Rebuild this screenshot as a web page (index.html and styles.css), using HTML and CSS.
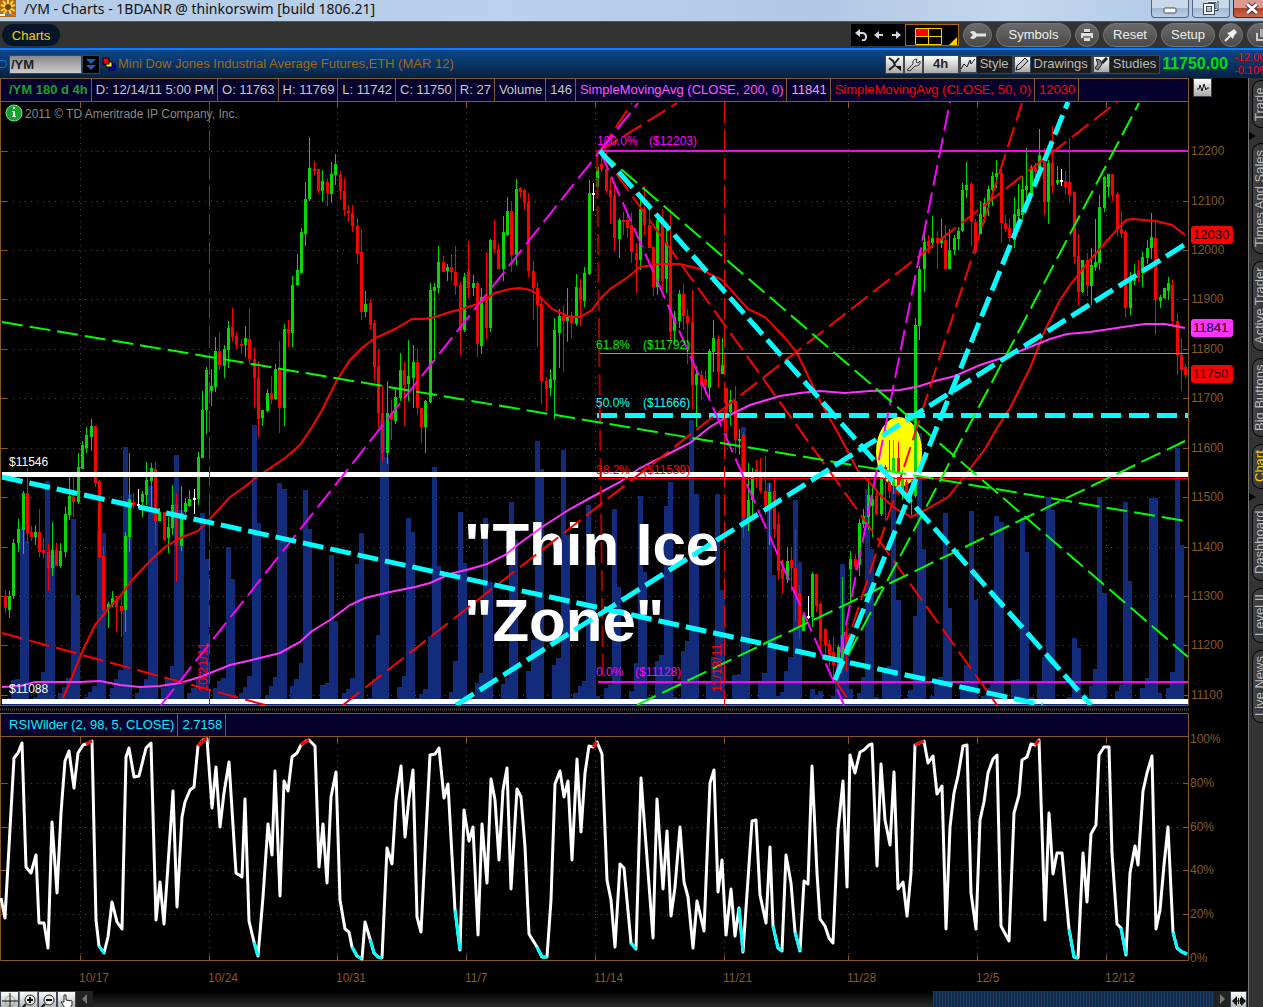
FILE: index.html
```html
<!DOCTYPE html>
<html lang="en">
<head>
<meta charset="utf-8">
<title>/YM - Charts</title>
<link rel="stylesheet" href="styles.css">
</head>
<body>
<div class="window">
  <header class="titlebar">
    <svg class="app-icon" viewBox="0 0 16 17" width="16" height="17"><rect width="16" height="17" fill="#b36a10"/><g stroke="#ffd24a" stroke-width="2"><path d="M8 7V0M8 7l5-6M8 7l7-2M8 7l7 4M8 7l3 7M8 7l-4 7M8 7l-7 4M8 7L1 5M8 7L3 1"/></g><circle cx="8" cy="7" r="3" fill="#7a3c00"/><path d="M0 15h5" stroke="#fff" stroke-width="2"/><path d="M6 15h5" stroke="#3d7ff0" stroke-width="2"/><path d="M11 15h5" stroke="#f60" stroke-width="2"/></svg>
    <h1 class="title">/YM - Charts - 1BDANR @ thinkorswim [build 1806.21]</h1>
    <div class="win-buttons">
      <button class="win" aria-label="Minimize"><svg width="14" height="16"><rect x="1" y="7" width="12" height="5" rx="1" fill="#fff" stroke="#444c5c"/></svg></button>
      <button class="win" aria-label="Restore"><svg width="16" height="16"><path d="M5 .5h9v8h-3" fill="none" stroke="#444c5c" stroke-width="3"/><path d="M5 .5h9v8h-3" fill="none" stroke="#fff"/><rect x="2" y="4" width="8" height="8" fill="none" stroke="#444c5c" stroke-width="4"/><rect x="2" y="4" width="8" height="8" fill="none" stroke="#fff" stroke-width="2"/></svg></button>
      <button class="win win-close" aria-label="Close"><svg width="14" height="14"><path d="M2 2l10 9M12 2L2 11" stroke="#4a3030" stroke-width="5"/><path d="M2 2l10 9M12 2L2 11" stroke="#fff" stroke-width="3"/></svg></button>
    </div>
  </header>

  <nav class="toolbar">
    <button class="tab-charts">Charts</button>
    <div class="tools">
      <div class="history">
        <button class="plain" aria-label="Undo"><svg width="12" height="12"><path d="M3 4h4q4 0 4 4t-4 3" fill="none" stroke="#d5d9e6" stroke-width="2"/><path d="M0 4l5-4v8z" fill="#d5d9e6"/></svg></button>
        <button class="plain" aria-label="Back"><svg width="10" height="10"><path d="M3 5h6" stroke="#d5d9e6" stroke-width="2"/><path d="M0 5l5-4v8z" fill="#d5d9e6"/></svg></button>
        <button class="plain" aria-label="Forward"><svg width="10" height="10"><path d="M1 5h6" stroke="#d5d9e6" stroke-width="2"/><path d="M10 5L5 1v8z" fill="#d5d9e6"/></svg></button>
      </div>
      <button class="layout" aria-label="Grid layout"><svg width="52" height="20"><rect x="10" y="3" width="12" height="8" fill="#f00"/><path d="M9.500 3.500h26v16h-26zM22.500 3v17M9 11.500h26" fill="none" stroke="#fc0"/><path d="M51 12v8h-8z" fill="#fc0"/></svg></button>
      <button class="pill wrench" aria-label="Tools"><svg width="18" height="10"><path d="M1 2q5-3 7 3q-2 6-7 3l3-3z" fill="#e4e4e4"/><path d="M7 5h10" stroke="#e4e4e4" stroke-width="3"/></svg></button>
      <button class="pill symbols">Symbols</button>
      <button class="pill round" aria-label="Print"><svg width="12" height="12"><path d="M3 0h6v3H3zM0 4h12v5H0zM3 8h6v4H3z" fill="#ddd"/><path d="M2 8h8M3 3.500h6" stroke="#222"/></svg></button>
      <button class="pill reset">Reset</button>
      <button class="pill setup">Setup</button>
      <button class="pill round pin" aria-label="Pin"><svg width="14" height="14"><path d="M1 13l5-5" stroke="#eee" stroke-width="2"/><path d="M3 5l6 6 1-3 3-4-3-3-4 3z" fill="#eee"/></svg></button>
      <button class="pill last" aria-label="Detach"><svg width="12" height="12"><rect x="4" width="8" height="8" fill="#aaa"/><path d="M1 4v7h7" fill="none" stroke="#ccc" stroke-width="2"/></svg></button>
    </div>
  </nav>

  <section class="symbolbar">
    <span class="ring"></span>
    <input class="symbol" value="/YM" aria-label="Symbol">
    <button class="drop" aria-label="Symbol list"><svg width="10" height="13"><path d="M0 1h10L5 6zM0 7h10l-5 5z" fill="#1a5fb8"/></svg></button>
    <svg class="link-icon" width="13" height="13"><rect x="6" y="6" width="6" height="6" fill="#00f" stroke="#000"/><rect x="3" y="4" width="6" height="5" fill="#ff0" stroke="#000"/><rect x="0" y="0" width="6" height="6" fill="#f00" stroke="#000"/></svg>
    <span class="instrument">Mini Dow Jones Industrial Average Futures,ETH (MAR 12)</span>
    <div class="chart-tools">
      <button class="tile" aria-label="Pointer"><svg width="16" height="16"><path d="M3 2l4 3 2 4-6 5M9 7l4-5" fill="none" stroke="#222" stroke-width="2"/><path d="M9 10l6 5v-5z" fill="#111"/></svg></button>
      <button class="tile" aria-label="Settings"><svg width="16" height="16"><path d="M2 14l6-6q-1-5 4-5l-1 3 2 1 2-2q1 5-5 5l-5 5z" fill="none" stroke="#333"/></svg></button>
      <button class="tile period">4h</button>
      <button class="tool"><i class="tile"><svg width="16" height="16"><path d="M1 13l3-5 3 3 3-7 1 4 4-5" fill="none" stroke="#111"/></svg></i>Style</button>
      <button class="tool"><i class="tile"><svg width="16" height="16"><path d="M2 14l1-4 8-8 3 3-8 8z" fill="#ccc" stroke="#111"/></svg></i>Drawings</button>
      <button class="tool"><i class="tile"><svg width="16" height="16"><path d="M3 3l4 1 2 4-4 6-3-2 3-4zM9 7l5-5" fill="#888" stroke="#222"/><path d="M9 7l5-5" stroke="#222" stroke-width="3"/></svg></i>Studies</button>
    </div>
    <strong class="price">11750.00</strong>
    <span class="change">-12.00<br>-0.10%</span>
  </section>

  <main class="workspace">
    <div class="charts">
      <div class="readout-row">
        <div class="readout">
          <strong class="series">/YM 180 d 4h</strong><span>D: 12/14/11 5:00 PM</span><span>O: 11763</span><span>H: 11769</span><span>L: 11742</span><span>C: 11750</span><span>R: 27</span><span>Volume</span><span>146</span><span class="sma200">SimpleMovingAvg (CLOSE, 200, 0)</span><span class="pink">11841</span><span class="sma50">SimpleMovingAvg (CLOSE, 50, 0)</span><span class="sma50">12030</span>
        </div>
        <button class="tile" aria-label="Studies"><svg width="16" height="16"><path d="M2 9h2l1-4 2 6 2-7 2 6 1-2h2" fill="none" stroke="#111"/></svg></button>
      </div>
      <svg class="plot" id="price-plot" viewBox="0 102 1248 604" role="img" aria-label="Price chart">
        <g id="price-grid" class="grid"></g>
        <g id="volume" class="volume"></g>
        <ellipse cx="899" cy="452" rx="23" ry="35" fill="#ff0"/>
        <g id="candles"></g>
        <g class="note"><text x="464" y="565">"Thin Ice</text><text x="464" y="641">"Zone"</text></g>
        <path class="ma50" d="M63 698L70 682 82 652 95 625 108 609 120 596 133 579 150 561 165 547 180 538 198 531 209 520 230 497 243 488 257 477 270 468 285 458 300 445 312 427 322 410 337 380 350 360 363 347 375 338 395 329 412 319 424 319 435 317 450 312 462 309 480 303 495 293 510 289 520 288 530 290 537 294 552 309 570 317 580 317 592 310 600 299 610 289 628 277 640 267 660 264 680 264 700 269 722 280 748 309 765 317 785 338 797 353 810 380 820 401 838 433 858 471 870 483 882 497 896 509 911 517 925 510 948 497 960 482 975 462 985 449 997 428 1010 408 1030 368 1045 330 1060 300 1070 285 1090 260 1113 234 1126 220 1133 219 1156 221 1172 225 1185 235"/>
        <path class="ma200" d="M2 687L20 686 35 682 80 682 100 681 120 685 140 687 160 686 180 683 200 677 230 665 260 658 280 653 300 642 312 631 330 620 350 605 365 598 390 592 415 587 430 583 450 574 470 569 487 564 505 555 520 543 545 525 570 509 590 498 620 482 640 468 670 453 690 443 710 427 730 415 750 405 760 402 780 396 800 393 820 391 845 393 870 391 900 390 920 386 935 381 955 376 980 365 1005 357 1030 347 1050 339 1067 334 1090 332 1110 329 1130 326 1145 324 1165 324 1185 328"/>
        <g class="level">
          <path d="M2 474.500H1188M2 701.500H1188" stroke="#fff" stroke-width="5"/>
          <path d="M2 704.500H1188" stroke="#122b7a"/>
          <path d="M598 151H1188M598 682H1188" stroke="#f0f" stroke-width="2"/>
          <path d="M598 353.500H1188" stroke="#0f0"/>
          <path d="M598 478.500H1188" stroke="#f00"/>
          <path d="M597 415.500H1188" stroke="#0ff" stroke-width="5" stroke-dasharray="20 8"/>
        </g>
        <g class="trend">
          <path class="dark" d="M597 150L603 682"/>
          <path class="red thin" d="M209.500 102V705M724.500 102V705"/>
          <path class="red" d="M2 633L265 705M343 705L1117 102M600 151L677 103M600 151L632 103M600 151L997 705M835 680L1022 103M835 680L847 698"/>
          <path class="magenta" d="M161 705L600 151M600 151L638 103M600 151L844 705M835 680L950 102"/>
          <path class="green" d="M2 322L1186 521M600 151L1188 657M637 705L1185 441M835 680L1139 103"/>
          <path class="cyan" d="M2 477L1043 705M456 705L1184 245M600 151L1091 705M835 680L1068 102"/>
        </g>
        <g class="label">
          <text x="25" y="118" class="copy">2011 © TD Ameritrade IP Company, Inc.</text>
          <g fill="#fff"><text x="9" y="466">$11546</text><text x="9" y="693">$11088</text></g>
          <g fill="#f0f"><text x="597" y="145">100.0%</text><text x="649" y="145">($12203)</text><text x="596" y="676">0.0%</text><text x="635" y="676">($11128)</text></g>
          <g fill="#0e0"><text x="596" y="349">61.8%</text><text x="643" y="349">($11792)</text></g>
          <g fill="#0ff"><text x="596" y="407">50.0%</text><text x="643" y="407">($11666)</text></g>
          <g fill="#f00"><text x="596" y="474">38.2%</text><text x="643" y="474">($11539)</text>
          <text class="date" transform="rotate(-90 207 692)" x="207" y="692">10/21/11</text><text class="date" transform="rotate(-90 721 692)" x="721" y="692">11/18/11</text></g>
        </g>
        <circle cx="14" cy="113" r="8" fill="#18a030" stroke="#7de08a"/>
        <path d="M13 107h2v2h-2zM12 111h3v5h1v1h-4v-1h1v-4h-1z" fill="#fff"/>
        <path class="frame" d="M.5 102V705.500H1188.500V102"/>
        <g id="price-axis" class="axis"></g>
        <g class="tag"><rect x="1191" y="226" width="42" height="18" rx="3" fill="#f00"/><text x="1193" y="239">12030</text><rect x="1191" y="319" width="42" height="18" rx="3" fill="#f3f"/><text x="1193" y="332">11841</text><rect x="1191" y="365" width="42" height="18" rx="3" fill="#f00"/><text x="1193" y="378">11750</text></g>
      </svg>
      <div class="splitter"></div>
      <div class="readout rsi-readout"><span>RSIWilder (2, 98, 5, CLOSE)</span><span>2.7158</span></div>
      <svg class="plot" id="rsi-plot" viewBox="0 737 1248 254" role="img" aria-label="RSI chart">
        <g id="rsi-grid" class="grid"></g>
        <path class="frame" d="M.5 737V960.500H1188.500V737"/>
        <g id="rsi-line" class="rsi"></g>
        <g id="rsi-axis" class="axis"></g>
      </svg>
      <footer class="bottombar">
        <button class="tile" aria-label="Crosshair"><svg width="16" height="16"><circle cx="8" cy="8" r="5" fill="none" stroke="#999"/><path d="M8 0v16M0 8h16" stroke="#111"/></svg></button>
        <button class="tile active" aria-label="Zoom in"><svg width="16" height="16"><circle cx="9" cy="7" r="5" fill="#eee" stroke="#222"/><path d="M5 11l-4 4M6 7h6M9 4v6" stroke="#111" stroke-width="2"/></svg></button>
        <button class="tile" aria-label="Zoom out"><svg width="16" height="16"><circle cx="9" cy="7" r="5" fill="#eee" stroke="#222"/><path d="M5 11l-4 4M6 7h6" stroke="#111" stroke-width="2"/></svg></button>
        <button class="tile" aria-label="Pan"><svg width="16" height="16"><path d="M5 9V2h2v5l6 1v4l-2 3H6L2 9z" fill="#fff" stroke="#222"/></svg></button>
        <button class="arrow" aria-label="Scroll left"><svg width="6" height="10"><path d="M5 0v10L0 5z" fill="#777"/></svg></button>
        <div class="track"><div class="thumb"></div></div>
        <button class="arrow" aria-label="Scroll right"><svg width="6" height="10"><path d="M1 0v10l5-5z" fill="#777"/></svg></button>
        <button class="tile fit" aria-label="Fit"><svg width="14" height="12"><path d="M0 6l5-5v10zM14 6L9 1v10z" fill="#111"/><path d="M4 6h6M6.500 3v6M8.500 3v6" stroke="#111"/></svg></button>
      </footer>
    </div>
    <aside class="side">
      <button class="t-trade">Trade</button>
      <i class="notch"></i>
      <button class="t-sales">Times And Sales</button>
      <button class="t-active">Active Trader</button>
      <button class="t-big">Big Buttons</button>
      <button class="t-chart">Chart</button>
      <i class="notch"></i>
      <button class="t-dash">Dashboard</button>
      <button class="t-level">Level II</button>
      <button class="t-news">Live News</button>
    </aside>
  </main>
</div>
<script src="chart.js"></script>
</body>
</html>
```

FILE: styles.css
```css
* { box-sizing: border-box; }
body { margin: 0; background: #000; font: 13px/16px "Liberation Sans", Arial, sans-serif; color: #ccc; overflow-x: hidden; }
button { font: inherit; color: inherit; border: 0; padding: 0; margin: 0; background: none; display: flex; align-items: center; justify-content: center; flex: none; white-space: nowrap; }
svg { display: block; flex: none; }
.window { display: flex; flex-direction: column; min-height: 100vh; overflow: hidden; }

.titlebar { display: flex; align-items: flex-start; height: 21px; background: linear-gradient(90deg, #b3cbe6, #b9d1ea 40%, #b0c8e2 65%, #c3d8ee 80%, #a9c3e0); }
.title { margin: 0 0 0 8px; font: 14px/17px "Noto Sans", sans-serif; color: #111; white-space: nowrap; }
.win-buttons { display: flex; gap: 3px; margin-left: auto; overflow: hidden; width: 112px; }
.win { width: 38px; height: 18px; border: 1px solid #53647c; border-top: 0; border-radius: 0 0 4px 4px; background: linear-gradient(#c9d9ea 50%, #a1bad5 50%, #bcd0e6); }
.win-close { background: linear-gradient(#dc9a8e 45%, #b43b24 45%, #c96a4c); border-color: #5a1c16; }

.toolbar { display: flex; align-items: center; height: 29px; padding-left: 2px; background: #333; border-top: 1px solid #555; border-bottom: 2px solid #0a7cff; }
.tab-charts { width: 58px; height: 22px; border-radius: 11px; background: #06162a; color: #fc0; padding-top: 2px; }
.tools { display: flex; align-items: center; margin-left: auto; width: 412px; overflow: hidden; gap: 4px; }
.history { display: flex; align-items: center; justify-content: space-around; width: 54px; height: 22px; background: #000; flex: none; }
.layout { width: 54px; height: 22px; background: #000; border: 1px solid #a60; margin-left: -4px; }
.pill { height: 24px; border-radius: 12px; border: 1px solid #777; background: linear-gradient(#6a6a6a, #4a4a4a); color: #eee; }
.wrench { width: 29px; }
.symbols { width: 75px; }
.round { width: 24px; }
.reset { width: 54px; }
.setup { width: 54px; }
.last { width: 29px; }

.symbolbar { display: flex; align-items: center; height: 28px; background: linear-gradient(#0b4789, #072c55 75%, #05203e); overflow: hidden; }
.ring { width: 7px; height: 8px; border: 1px solid #1a6cc8; border-left: 0; border-radius: 0 4px 4px 0; margin-right: 2px; flex: none; }
.symbol { width: 73px; height: 19px; padding: 0 1px; border: 1px solid #445; background: linear-gradient(#888, #ccc); font: bold 13px/16px "Liberation Sans", Arial, sans-serif; color: #222; border-radius: 0; }
.drop { width: 18px; height: 19px; background: #000; border: 1px solid #345; }
.link-icon { margin: 0 2px 0 3px; overflow: visible; }
.instrument { color: #a06a10; white-space: nowrap; }
.chart-tools { display: flex; align-items: center; margin-left: auto; }
.tile { display: flex; align-items: center; justify-content: center; width: 19px; height: 19px; flex: none; border: 1px solid #3d4650; background: linear-gradient(#fff, #aaa); color: #222; overflow: hidden; }
.period { width: 36px; font-weight: bold; }
.tool { height: 19px; background: #1c1c1c; border: 1px solid #3d4650; padding-right: 3px; gap: 3px; color: #bbb; }
.tool .tile { width: 17px; height: 17px; }
.price { margin-left: 2px; font-size: 16px; color: #0d0; flex: none; }
.change { width: 29px; margin-left: 6px; overflow: hidden; white-space: nowrap; font-size: 11px; line-height: 13px; color: #f00; flex: none; }

.workspace { display: flex; flex: 1; align-items: stretch; }
.charts { flex: 1; min-width: 0; display: flex; flex-direction: column; }
.readout-row { display: flex; gap: 4px; align-items: flex-start; }
.readout { display: flex; flex: 1; min-width: 0; height: 24px; border: 1px solid #865a20; background: #06002d; overflow: hidden; line-height: 22px; white-space: nowrap; color: #c8c8c8; }
.readout > * { border-right: 1px solid #865a20; padding: 0 3px 0 4px; flex: none; }
.readout-row .tile { margin-right: 36px; }
.readout .series { color: #18a030; padding-left: 8px; }
.readout .sma200 { color: #f5f; }
.readout .pink { color: #f9e; }
.readout .sma50 { color: #f00; }
.rsi-readout { flex: none; margin-right: 59px; color: #0ef; }
.rsi-readout span:first-child { padding-left: 8px; }
.splitter { height: 7px; margin-right: 59px; background: repeating-linear-gradient(90deg, #383838 0 1px, #000 1px 2px) content-box; padding: 2px 0; }

.plot { width: 100%; height: auto; font-size: 12px; overflow: visible; }
#price-plot { overflow: hidden; }
.grid path { stroke: #6c4618; stroke-dasharray: 1 5; fill: none; }
.grid .tick, .frame { stroke: #865a20; stroke-dasharray: none; fill: none; }
.axis { fill: #865a20; }
.volume { fill: #122b7a; }
.ma50 { fill: none; stroke: #f00; stroke-width: 2; }
.ma200 { fill: none; stroke: #f3f; stroke-width: 2; }
.trend path { fill: none; stroke-width: 2; stroke-dasharray: 21 7; }
.trend .red { stroke: #f00; }
.trend .thin { stroke-width: 1; }
.trend .dark { stroke: #a00; }
.trend .magenta { stroke: #f0f; }
.trend .green { stroke: #0f0; }
.trend .cyan { stroke: #0ff; stroke-width: 5; }
.note { font-size: 60px; font-weight: bold; fill: #fff; }
.copy { fill: #888; }
.date { font-size: 13px; }
.tag { fill: #000; font-size: 13px; }
.rsi path { fill: none; stroke: #fff; stroke-width: 3; stroke-linejoin: round; }
.rsi .high { stroke: #f00; }
.rsi .low { stroke: #0ff; }

.bottombar { display: flex; align-items: stretch; height: 16px; background: #111; overflow: hidden; }
.active { border-color: #2a7de0; }
.arrow { width: 17px; background: #222; }
.track { flex: 1; display: flex; justify-content: flex-end; background: linear-gradient(#000, #2a2a2a); }
.thumb { width: 25%; background: repeating-linear-gradient(90deg, #1d4268 0 1px, #12294a 1px 3px); }
.fit { width: 17px; margin-right: 1px; }

.side { width: 15px; flex: none; background: #333; border-left: 1px solid #777; display: flex; flex-direction: column; overflow: hidden; gap: 7px; padding-left: 3px; }
.side button { width: 20px; border: 1px solid #000; border-radius: 9px; background: linear-gradient(90deg, #2e2e2e, #444); color: #bbb; writing-mode: vertical-rl; transform: rotate(180deg); line-height: 16px; padding-left: 5px; }
.side .t-trade { height: 48px; margin-top: 2px; }
.side .t-sales { height: 111px; margin-top: 8px; }
.side .t-active { height: 90px; }
.side .t-big { height: 79px; }
.side .t-chart { height: 45px; color: #fc0; }
.side .t-dash { height: 77px; margin-top: 8px; }
.side .t-level { height: 55px; }
.side .t-news { height: 73px; }
.side .notch { height: 8px; width: 7px; margin: -3px 0 -12px -3px; background: #000; clip-path: polygon(0 0, 100% 50%, 0 100%); flex: none; }
```

FILE: chart.js
```js
const NS = 'http://www.w3.org/2000/svg';

function add(parent, name, attrs, text) {
  const node = document.createElementNS(NS, name);
  for (const key in attrs) node.setAttribute(key, attrs[key]);
  if (text) node.textContent = text;
  document.getElementById(parent).appendChild(node);
}

const weeks = [[80, '10/17'], [209, '10/24'], [337, '10/31'], [466, '11/7'], [595, '11/14'], [724, '11/21'], [848, '11/28'], [977, '12/5'], [1106, '12/12']];
const prices = [151, 201, 250, 299, 349, 398, 448, 497, 547, 596, 645, 695];

prices.forEach((y, i) => {
  add('price-grid', 'path', { d: `M1 ${y + 0.5}H1188` });
  add('price-grid', 'path', { class: 'tick', d: `M1 ${y + 0.5}H7M1183 ${y + 0.5}H1188` });
  add('price-axis', 'text', { x: 1191, y: y + 4 }, String(12200 - i * 100));
});
[783, 827, 870, 914].forEach(y => {
  add('rsi-grid', 'path', { d: `M1 ${y + 0.5}H1188` });
  add('rsi-grid', 'path', { class: 'tick', d: `M1 ${y + 0.5}H7M1183 ${y + 0.5}H1188` });
});
[[739, '100%'], [783, '80%'], [827, '60%'], [870, '40%'], [914, '20%'], [958, '0%']].forEach(([y, t]) => {
  add('rsi-axis', 'text', { x: 1190, y: y + 4 }, t);
});
weeks.forEach(([x, t]) => {
  add('price-grid', 'path', { d: `M${x + 0.5} 113V705` });
  add('price-grid', 'path', { class: 'tick', d: `M${x + 0.5} 102V108` });
  add('rsi-grid', 'path', { d: `M${x + 0.5} 743V960` });
  add('rsi-grid', 'path', { class: 'tick', d: `M${x + 0.5} 737V743M${x + 0.5} 955V960` });
  add('rsi-axis', 'text', { x: x - 1, y: 982 }, t);
});

// Volume: left edge, top
const volume = `7 698,11 680,15 679,20 527,24 541,33 697,37 686,41 672,45 481,50 555,58 693,62 687,66 678,71 519,75 595,84 697,88 692,92 686,97 531,101 533,110 688,114 679,118 670,123 447,127 494,135 693,139 686,144 679,148 486,153 510,161 688,165 678,170 666,174 455,179 510,187 693,191 688,196 679,200 513,204 559,213 688,217 681,221 678,226 547,230 579,239 693,243 687,247 676,252 425,256 523,265 695,269 686,273 677,277 483,282 489,290 686,294 679,299 663,303 490,307 529,
320 685,325 683,329 555,333 621,342 693,346 689,350 678,355 564,359 533,367 698,372 679,376 635,380 420,384 457,397 687,402 676,406 518,410 532,415 698,419 694,423 689,428 636,432 467,436 566,449 692,453 661,458 512,462 563,475 683,479 673,483 518,488 582,501 684,505 678,509 502,513 540,526 671,531 640,535 441,539 469,552 665,556 658,561 450,565 535,569 698,573 693,578 686,582 681,586 505,591 556,595 696,
604 688,608 685,612 509,616 587,629 691,634 663,638 496,642 572,647 697,651 695,655 661,659 655,664 506,668 482,672 697,677 698,681 651,685 641,689 420,694 494,706 683,711 657,715 494,720 590,732 675,737 674,741 427,745 517,758 681,762 673,767 483,771 575,775 696,780 692,784 671,788 657,793 500,797 562,810 689,814 695,818 691,831 696,835 677,840 564,844 653,848 689,857 693,861 677,865 489,869 549,874 697,882 673,887 666,891 487,896 600,
904 698,908 690,913 616,917 433,921 549,930 696,934 681,938 677,943 513,947 608,960 685,964 665,969 511,973 600,981 696,986 688,990 684,994 516,999 522,1011 680,1016 679,1020 517,1024 552,1029 697,1037 681,1042 657,1046 497,1050 510,1067 697,1072 638,1076 648,1089 686,1093 669,1097 497,1102 593,1115 691,1119 685,1123 502,1127 581,1140 688,1145 678,1149 498,1153 498,1157 693,1166 688,1170 672,1175 448,1179 545`;
volume.split(',').forEach(v => {
  const [x, y] = v.trim().split(' ').map(Number);
  add('volume', 'rect', { x, y, width: 5, height: 699 - y });
});

// Candles: colour + centre, high, body top, body bottom, low
const candles = `r5 590 596 608 613,g9 591 596 610 618,g13 539 543 596 599,g18 519 529 543 552,g23 491 493 530 554,r27 468 493 533 544,r31 526 532 537 541,g35 525 532 537 545,r39 509 532 552 557,r43 538 550 553 558,r48 544 552 568 591,g52 522 550 568 576,r56 543 550 566 566,g60 543 551 566 568,g65 507 514 552 557,g69 477 496 515 520,r73 477 497 502 517,g78 453 467 502 504,g82 441 445 469 469,g86 427 435 448 453,g91 419 426 437 451,r95 426 426 483 487,r99 480 481 557 558,r103 546 556 610 612,g108 602 604 609 628,g112 591 598 605 607,r116 596 600 607 632,r121 598 606 611 637,g125 532 536 610 632,g129 453 499 537 552,r133 493 502 506 509,w138 489 504 506 508,g142 491 494 502 517,g146 462 480 495 505,g151 463 468 481 512,r155 462 469 521 545,g159 508 512 521 521,r164 512 512 540 541,g168 517 527 538 553,g172 485 505 528 535,r176 494 504 546 582,g181 486 513 546 551,g185 498 503 512 514,g189 490 499 506 507,w194 489 498 500 514,g198 452 457 499 505,g202 391 410 458 458,g206 367 370 410 434,g211 369 386 391 406,g215 337 351 387 392,r219 332 351 365 370,g224 345 349 366 378,g228 321 328 350 368,r232 308 327 337 341,r236 332 336 345 349,r241 339 344 346 354,g245 326 338 345 357,r249 308 339 359 364,r254 348 359 378 408,r258 361 378 419 437,g262 410 410 418 426,g267 389 393 411 412,r271 376 393 399 404,g275 364 369 399 400,r279 341 368 408 433,g284 324 329 408 426,r288 320 329 333 347,g292 276 285 333 347,g297 254 270 285 286,g301 228 232 273 273,g305 182 199 234 246,g309 137 168 199 201,r314 161 169 171 175,r318 169 169 191 193,
g322 170 181 191 202,r327 179 182 193 206,g331 162 174 194 203,g335 154 164 175 185,r340 171 175 191 200,r344 178 191 210 216,r348 205 211 213 222,r352 205 213 226 232,r357 218 226 254 264,r361 229 252 312 320,g365 291 304 312 317,r370 299 303 325 330,r374 320 323 367 381,r378 349 366 413 428,r382 385 413 453 462,g387 381 413 453 464,r391 400 413 420 440,g395 389 397 421 424,g400 353 370 398 401,r404 362 370 385 426,g408 340 376 384 401,g413 345 362 378 408,r417 348 362 408 415,r421 408 408 427 443,g425 400 401 427 453,g430 283 290 402 403,g434 283 287 291 359,g438 246 262 288 293,r443 256 262 272 272,g447 264 267 271 281,r451 254 267 272 281,r455 246 272 286 295,r460 282 285 330 355,g464 273 277 330 332,r468 241 271 288 298,g473 275 283 288 296,r477 281 283 344 357,g481 288 297 346 354,r486 252 297 328 339,g490 239 240 328 332,r494 220 240 249 254,r498 243 249 269 269,g503 216 232 269 281,g507 197 211 235 236,r511 202 211 255 272,g516 179 189 255 265,r520 187 188 192 198,r524 189 190 203 210,r528 193 202 271 277,r533 261 271 288 320,r537 282 288 305 347,r541 300 304 381 404,r546 377 381 389 411,g550 369 379 388 396,g554 318 330 380 419,g559 309 316 333 368,r563 305 316 321 372,g567 288 317 321 342,r571 312 315 323 339,g576 274 287 324 326,r580 279 288 300 326,g584 267 273 301 307,g589 180 193 274 275,w593 183 193 195 211,g597 152 167 187 187,
r601 150 164 169 172,r606 150 169 191 193,r610 178 190 197 224,r614 184 196 238 251,g619 218 220 239 258,r623 212 220 222 235,r627 212 220 228 238,r631 212 225 252 263,r636 243 253 260 293,g640 200 209 260 270,r644 186 209 225 235,r649 209 225 248 248,r653 247 247 287 296,g657 216 220 287 295,r662 209 218 281 289,g666 223 242 279 293,r670 209 246 332 340,g674 311 317 331 344,g679 290 294 321 328,r683 284 294 316 330,r687 309 316 323 364,r692 290 322 385 410,g696 366 374 385 427,r701 370 375 386 400,r705 370 379 385 395,g709 349 351 388 398,g713 320 338 352 372,r718 335 339 372 388,g722 338 365 374 374,r726 388 388 410 438,g730 390 400 412 425,r735 386 401 440 453,g739 429 439 441 455,r743 432 435 518 538,g748 463 500 519 531,g752 468 472 500 517,r756 460 469 472 488,r760 458 471 491 493,r765 456 491 505 515,g769 483 492 505 545,r774 478 491 529 538,r778 513 524 571 580,r782 560 569 579 594,g787 547 561 579 583,r791 547 560 568 591,r795 529 568 594 621,r799 585 593 626 639,g803 613 615 631 631,w808 596 616 618 619,g812 572 574 617 627,r816 574 574 606 612,r820 602 604 641 650,r825 628 629 645 661,r829 640 644 659 667,r833 636 652 665 676,g838 645 647 661 675,g842 577 635 658 660,r846 620 637 655 672,g850 551 559 569 601,r855 554 559 567 570,g859 519 523 565 576,g863 509 516 524 528,g868 478 495 517 530,g872 488 499 506 537,r876 490 496 514 516,g881 471 477 514 516,r885 465 467 477 521,r889 440 470 491 498,g893 440 458 486 494,r898 442 458 488 495,g902 470 478 490 500,r906 480 482 494 502,g911 480 486 489 515,g915 318 325 496 498,
g919 266 269 326 340,g924 234 242 269 292,r928 235 241 246 253,g932 216 238 243 248,r937 231 238 243 269,g941 219 238 243 248,r945 225 240 269 269,g949 229 250 269 269,g954 235 238 250 255,g958 227 231 239 250,g962 183 190 231 232,g966 162 185 190 198,r971 182 184 222 246,r975 219 222 252 254,g980 201 214 234 234,g984 198 203 217 223,g988 186 189 204 216,g992 172 176 190 206,g996 160 173 177 188,r1001 169 173 223 243,r1005 215 223 229 232,r1009 218 228 238 242,g1014 197 214 240 248,g1018 184 209 216 222,g1022 176 189 215 219,g1026 148 186 190 198,g1031 165 167 196 199,r1035 163 168 172 180,g1039 129 155 168 170,r1044 148 157 202 215,g1048 160 163 202 224,r1052 126 163 186 193,g1057 166 180 183 185,w1061 169 180 182 186,r1065 171 181 187 194,r1069 138 182 195 203,r1074 191 192 257 264,r1078 234 256 292 305,g1082 260 260 292 293,r1087 253 260 286 296,g1091 248 265 286 305,g1095 219 262 267 271,g1099 195 207 263 270,g1104 176 177 208 212,g1108 174 174 187 197,r1112 174 174 195 201,r1117 192 194 229 236,r1121 211 229 234 238,r1125 230 232 308 318,g1130 272 281 308 315,g1134 264 275 281 285,r1138 260 270 278 282,g1142 252 257 273 287,g1147 240 248 258 264,g1151 213 237 248 259,r1155 221 238 300 335,g1160 295 297 301 308,g1164 288 288 298 299,g1168 277 283 291 300,r1172 280 285 321 326,r1177 313 321 355 375,r1181 338 355 370 391,r1185 364 367 375 379`;
const colors = { r: '#f00', g: '#00d800', w: '#fff' };
candles.split(',').forEach(c => {
  c = c.trim();
  const fill = colors[c[0]];
  const [x, high, top, bottom, low] = c.slice(1).split(' ').map(Number);
  add('candles', 'rect', { x, y: high, width: 1, height: low - high, fill });
  add('candles', 'rect', { x: x - 1, y: top, width: 3, height: Math.max(1, bottom - top), fill });
});

// RSI points; a leading h or l colours the stretch that follows
const rsi = `1 898,5 918,14 758,18 753,22 743,26 867,31 873,36 855,39 923,44 923,48 948,52 822,57 893,61 813,65 761,69 751,74 788,78 753,83 745,h86 744,92 741,96 920,l99 946,104 953,108 937,112 902,117 922,122 929,126 757,129 748,134 777,139 776,146 748,151 743,156 920,160 882,164 924,173 791,177 907,182 817,185 802,190 790,194 787,h198 746,h203 740,207 739,212 808,216 767,220 827,224 793,229 762,236 873,242 877,245 799,249 921,l254 942,258 956,263 897,268 824,272 855,275 771,280 896,284 781,288 791,292 757,297 753,h301 745,h306 741,309 740,315 746,319 867,323 824,327 883,331 797,336 772,340 900,345 929,349 932,l352 947,l357 956,362 959,365 922,l370 939,l374 953,l378 957,382 958,387 848,392 864,396 800,401 766,405 837,409 798,413 770,417 917,421 932,426 833,430 755,435 754,439 748,444 798,448 784,l455 910,460 950,464 810,469 841,473 827,478 935,482 824,487 883,491 779,495 800,499 860,503 790,507 768,511 889,517 789,521 797,525 847,529 934,l537 947,l542 957,547 957,551 900,555 784,560 771,564 797,568 781,572 860,577 759,581 832,585 773,589 746,h593 747,597 742,602 754,607 880,611 900,615 947,620 864,624 868,l631 943,636 949,641 778,653 938,657 799,663 889,667 831,671 916,675 887,680 827,684 882,688 897,693 948,697 901,704 931,710 783,714 770,718 892,722 860,726 935,731 889,735 936,l739 908,743 952,752 821,756 820,760 895,766 923,770 847,l773 926,l778 948,782 951,786 855,791 883,l795 932,800 951,804 881,808 884,812 766,817 873,820 919,825 926,829 938,833 943,838 830,843 781,847 887,850 755,855 773,860 752,864 750,869 745,872 744,877 866,881 764,885 820,890 845,894 772,898 889,903 882,907 916,911 873,h915 745,924 741,928 763,933 756,937 794,942 786,946 929,950 827,954 793,958 776,963 746,967 745,971 893,976 929,980 820,984 802,988 773,993 759,997 755,1001 926,1009 941,1014 813,1019 795,1022 760,1027 757,1031 744,h1035 745,1039 740,1045 920,1049 813,1053 874,1057 853,1062 853,l1069 929,l1074 957,1078 958,1083 853,1087 902,1091 834,1096 825,1099 755,1104 747,1109 747,1112 853,1117 924,l1121 928,1126 955,1130 873,1135 846,1138 865,1143 791,1147 773,1152 756,1156 929,1160 910,1164 865,1168 827,l1173 932,l1177 948,l1182 952,1187 954`.split(',');
const bare = p => p.replace(/[hl]/, '');
add('rsi-line', 'path', { d: 'M' + rsi.map(bare).join('L') });
rsi.forEach((p, i) => {
  if (p[0] !== 'h' && p[0] !== 'l') return;
  add('rsi-line', 'path', { class: p[0] === 'h' ? 'high' : 'low', d: `M${bare(p)}L${bare(rsi[i + 1])}` });
});
```
